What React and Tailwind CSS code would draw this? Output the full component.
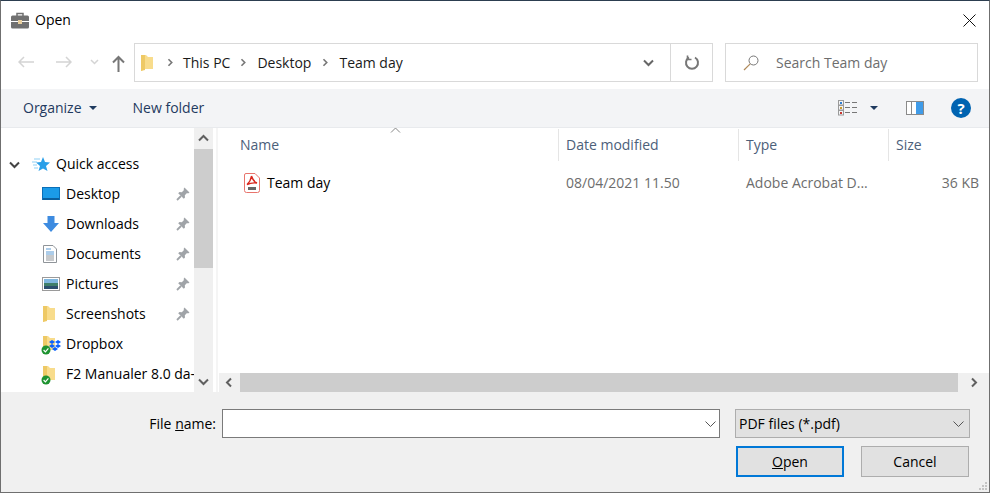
const Chevron = ({ className = "", dir = "right" }) => {
  const d = {
    right: "M3 1.5 L7 5.5 L3 9.5",
    left: "M7 1.5 L3 5.5 L7 9.5",
    up: "M1 7.5 L5.5 3 L10 7.5",
    down: "M1 3.5 L5.5 8 L10 3.5",
  }[dir];
  return (
    <svg width="11" height="11" viewBox="0 0 11 11" fill="none" stroke="currentColor" strokeWidth="2" className={className}>
      <path d={d} />
    </svg>
  );
};

const ThinChevron = () => (
  <svg width="13" height="8" viewBox="0 0 13 8" fill="none" stroke="#555" strokeWidth="1">
    <path d="M1.5 1.5 L6.5 6.5 L11.5 1.5" />
  </svg>
);

const Folder = ({ w = 12 }) => (
  <svg width={w + 2} height="18" viewBox="0 0 14 18">
    <path d="M1 1 H6 L8 3 H13 V15 H5 L1 17 Z" fill="#f8dc8c" />
    <path d="M1 1 H5 V16 L1 17 Z" fill="#eec965" />
  </svg>
);

const Check = () => (
  <svg width="10" height="10" viewBox="0 0 10 10" className="absolute left-[-1px] bottom-[-2px]">
    <circle cx="5" cy="5" r="4.5" fill="#1e9331" />
    <path d="M2.6 5 L4.4 6.8 L7.4 3.4" fill="none" stroke="#fff" strokeWidth="1.2" />
  </svg>
);

const Pin = () => (
  <svg width="14" height="14" viewBox="0 0 14 14">
    <path d="M8.5 0.5 L13.5 5.5 L12 6.4 L11 6 L8.8 8.2 L9 10.5 L7.8 11.8 L2.2 6.2 L3.5 5 L5.8 5.2 L8 3 L7.6 2 Z" fill="#a0a4a8" />
    <path d="M5 9 L1 13" stroke="#a0a4a8" strokeWidth="1.8" />
  </svg>
);

const navItems = [
  {
    label: "Desktop",
    pin: true,
    icon: (
      <svg width="18" height="14" viewBox="0 0 18 14">
        <rect x="0.5" y="0.5" width="17" height="12" fill="#1b9be8" stroke="#0a6fb8" />
        <rect x="1" y="11" width="16" height="2" fill="#0b5f9e" />
      </svg>
    ),
  },
  {
    label: "Downloads",
    pin: true,
    icon: (
      <svg width="18" height="18" viewBox="0 0 18 18">
        <path d="M5.5 1 H12.5 V8 H17 L9 17 L1 8 H5.5 Z" fill="#3d8be0" />
      </svg>
    ),
  },
  {
    label: "Documents",
    pin: true,
    icon: (
      <svg width="16" height="18" viewBox="0 0 16 18">
        <path d="M1.5 0.5 H11 L14.5 4 V17.5 H1.5 Z" fill="#fff" stroke="#8f9499" />
        <path d="M4 4 H9 M4 7 H12 M4 9 H12" stroke="#5b9bd5" />
        <path d="M4 11 H12 M4 13 H12 M4 15 H12" stroke="#8f9499" />
      </svg>
    ),
  },
  {
    label: "Pictures",
    pin: true,
    icon: (
      <svg width="18" height="14" viewBox="0 0 18 14">
        <rect x="0.5" y="0.5" width="17" height="13" fill="#fff" stroke="#9a9a9a" />
        <rect x="2" y="2" width="14" height="4" fill="#7fb7df" />
        <rect x="2" y="6" width="14" height="3" fill="#3f7f6a" />
        <rect x="2" y="9" width="14" height="3" fill="#2b4f6e" />
      </svg>
    ),
  },
  { label: "Screenshots", pin: true, icon: <Folder /> },
  {
    label: "Dropbox",
    icon: (
      <span className="relative flex">
        <Folder />
        <svg width="12" height="11" viewBox="0 0 12 11" className="absolute left-[7px] top-[5px]">
          <path d="M3 0 L6 2 L3 4 L0 2 Z M9 0 L12 2 L9 4 L6 2 Z M3 4 L6 6 L3 8 L0 6 Z M9 4 L12 6 L9 8 L6 6 Z M6 7 L9 9 L6 11 L3 9 Z" fill="#0a60ff" />
        </svg>
        <Check />
      </span>
    ),
  },
  {
    label: "F2 Manualer 8.0 da-",
    icon: (
      <span className="relative flex">
        <Folder />
        <Check />
      </span>
    ),
  },
];

const columns = [
  { label: "Name", cls: "w-[341px] pl-[22px]" },
  { label: "Date modified", cls: "w-[180px] pl-[7px]" },
  { label: "Type", cls: "w-[150px] pl-[7px]" },
  { label: "Size", cls: "flex-1 pl-[7px]" },
];

export default function App() {
  return (
    <div className="w-[990px] h-[493px] flex flex-col overflow-hidden bg-white border border-t-[#2c3e50] border-x-[#6f6f6f] border-b-[#6f6f6f] text-[14px] text-black font-['Open_Sans','Noto_Sans',sans-serif] leading-5">
      {/* Titlebar */}
      <div className="h-[38px] shrink-0 flex items-center pl-[10px] pr-[13px]">
        <svg width="18" height="17" viewBox="0 0 18 17">
          <path d="M6 4 V1.5 H12 V4" fill="none" stroke="#707070" strokeWidth="1.5" />
          <path d="M0 5 Q0 3.5 1.5 3.5 H16.5 Q18 3.5 18 5 V9 H0 Z" fill="#707070" />
          <path d="M0 10 H18 V15 Q18 16.5 16.5 16.5 H1.5 Q0 16.5 0 15 Z" fill="#707070" />
          <rect x="7" y="8" width="4" height="4" fill="#e9cf9e" />
        </svg>
        <span className="ml-[6px] text-[14px]">Open</span>
        <svg width="13" height="13" viewBox="0 0 13 13" className="ml-auto" stroke="#111" strokeWidth="1" fill="none">
          <path d="M0.5 0.5 L12.5 12.5 M12.5 0.5 L0.5 12.5" />
        </svg>
      </div>

      {/* Address row */}
      <div className="h-[50px] shrink-0 flex items-start pt-[4px] pl-[17px] pr-[11px]">
        <div className="w-[116px] h-[38px] flex items-center shrink-0">
          <svg width="16" height="12" viewBox="0 0 16 12" fill="none" stroke="#d4d4d4" strokeWidth="1.5">
            <path d="M16 6 H1 M6 1 L1 6 L6 11" />
          </svg>
          <svg width="16" height="12" viewBox="0 0 16 12" fill="none" stroke="#d4d4d4" strokeWidth="1.5" className="ml-[22px]">
            <path d="M0 6 H15 M10 1 L15 6 L10 11" />
          </svg>
          <svg width="9" height="6" viewBox="0 0 9 6" fill="none" stroke="#d4d4d4" strokeWidth="1.5" className="ml-[18px]">
            <path d="M1 1 L4.5 4.5 L8 1" />
          </svg>
          <svg width="13" height="17" viewBox="0 0 13 17" fill="none" stroke="#777" strokeWidth="2" className="ml-[13px] mt-[3px]">
            <path d="M6.5 17 V2 M1 7.5 L6.5 2 L12 7.5" />
          </svg>
        </div>
        <div className="w-[537px] h-[39px] flex items-center border border-[#d9d9d9] pl-[5px] shrink-0">
          <Folder />
          <Chevron className="ml-[12px] text-[#777] w-[9px] h-[9px]" />
          <span className="ml-[8px] text-[#1a1a1a]">This PC</span>
          <Chevron className="ml-[9px] text-[#777] w-[9px] h-[9px]" />
          <span className="ml-[9px] text-[#1a1a1a]">Desktop</span>
          <Chevron className="ml-[10px] text-[#777] w-[9px] h-[9px]" />
          <span className="ml-[9px] text-[#1a1a1a]">Team day</span>
          <Chevron dir="down" className="ml-auto mr-[16px] text-[#666]" />
        </div>
        <div className="w-[42px] h-[39px] flex items-center justify-center border border-l-0 border-[#d9d9d9] shrink-0">
          <svg width="16" height="16" viewBox="0 0 16 16" fill="none" stroke="#777" strokeWidth="2">
            <path d="M5 2.5 A6 6 0 1 0 11 2.5" />
            <path d="M3.5 0.5 V4.5 H7.5" strokeWidth="1.6" />
          </svg>
        </div>
        <div className="ml-[12px] w-[253px] h-[39px] flex items-center border border-[#d9d9d9] pl-[17px] shrink-0">
          <svg width="16" height="16" viewBox="0 0 16 16" fill="none" stroke="#777" strokeWidth="1">
            <circle cx="10.5" cy="5.5" r="4.5" />
            <path d="M7.2 8.8 L1 15" stroke="#b08a5a" strokeWidth="1.2" />
          </svg>
          <span className="ml-[17px] text-[#6d6d6d]">Search Team day</span>
        </div>
      </div>

      {/* Toolbar */}
      <div className="h-[39px] shrink-0 flex items-center bg-[#f3f4f6] border-b border-[#e8eaed] pl-[22px] pr-[18px] text-[#1f3a5f]">
        <span>Organize</span>
        <svg width="8" height="4" viewBox="0 0 8 4" className="ml-[7px]"><path d="M0 0 H8 L4 4 Z" fill="#1f3a5f" /></svg>
        <span className="ml-[36px]">New folder</span>
        <svg width="19" height="16" viewBox="0 0 19 16" className="ml-auto" fill="none" stroke="#9a9a9a">
          <rect x="0.5" y="0.5" width="5" height="4.5" />
          <rect x="0.5" y="5.5" width="5" height="4.5" />
          <rect x="0.5" y="10.5" width="5" height="4.5" />
          <path d="M7 2.5 H12 M14 2.5 H19 M7 7.5 H12 M14 7.5 H19 M7 12.5 H12 M14 12.5 H19" stroke="#777" />
          <rect x="2" y="2" width="2" height="2" fill="#2d7dd2" stroke="none" />
          <rect x="2" y="7" width="2" height="2" fill="#c99a2e" stroke="none" />
          <rect x="2" y="12" width="2" height="2" fill="#c9352e" stroke="none" />
        </svg>
        <svg width="8" height="4" viewBox="0 0 8 4" className="ml-[13px]"><path d="M0 0 H8 L4 4 Z" fill="#1f3a5f" /></svg>
        <svg width="18" height="14" viewBox="0 0 18 14" className="ml-[28px]">
          <rect x="0.5" y="0.5" width="17" height="13" fill="#fff" stroke="#8a8a8a" />
          <rect x="10" y="1" width="7" height="12" fill="#3f9be8" />
          <rect x="5" y="1" width="1" height="12" fill="#8a8a8a" />
        </svg>
        <span className="ml-[27px] w-[20px] h-[20px] rounded-full bg-[#0063b1] text-white font-bold text-[15px] flex items-center justify-center">?</span>
      </div>

      {/* Main */}
      <div className="h-[264px] shrink-0 flex">
        <div className="w-[193px] shrink-0 overflow-hidden pt-[21px] pl-[8px]">
          <div className="h-[30px] flex items-center whitespace-nowrap">
            <Chevron dir="down" className="text-[#444]" />
            <svg width="18" height="16" viewBox="0 0 18 16" className="ml-[12px]">
              <path d="M11 1 L13 6 L18 6.5 L14 10 L15.5 15 L11 12.5 L6.5 15 L8 10 L4 6.5 L9 6 Z" fill="#2a9fe8" />
              <path d="M2 3 H8 M0 6 H5 M1 9 H5 M2 12 H6" stroke="#8fd0f5" />
            </svg>
            <span className="ml-[6px]">Quick access</span>
          </div>
          {navItems.map((item) => (
            <div key={item.label} className="h-[30px] flex items-center whitespace-nowrap pl-[33px] pr-[4px]">
              <span className="w-[24px] flex shrink-0 items-center">{item.icon}</span>
              <span className="text-[14px]">{item.label}</span>
              {item.pin && <span className="ml-auto flex"><Pin /></span>}
            </div>
          ))}
        </div>

        {/* Sidebar scrollbar */}
        <div className="w-[19px] shrink-0 flex flex-col bg-[#f0f0f0] text-[#606060]">
          <div className="h-[21px] flex items-center justify-center"><Chevron dir="up" /></div>
          <div className="h-[119px] bg-[#cdcdcd]" />
          <div className="mt-auto h-[21px] flex items-center justify-center"><Chevron dir="down" /></div>
        </div>
        <div className="w-[3px] shrink-0" />
        <div className="w-[2px] shrink-0 bg-[#f5f5f5]" />

        {/* File list */}
        <div className="flex-1 flex flex-col min-w-0 relative">
          <Chevron dir="up" className="absolute left-[172px] top-[-3px] text-[#888] [stroke-width:1px]" />
          <div className="h-[33px] flex items-center shrink-0 text-[#4c607a] pt-[1px]">
            {columns.map((c) => (
              <div key={c.label} className={`${c.cls} h-full flex items-center border-r border-[#e5e5e5] last:border-r-0`}>
                {c.label}
              </div>
            ))}
          </div>
          <div className="h-[44px] flex items-center text-[#6d6d6d] shrink-0">
            <div className="w-[341px] pl-[26px] flex items-center text-black">
              <svg width="16" height="20" viewBox="0 0 16 20">
                <path d="M2 0.5 H11 L15.5 5 V17.5 Q15.5 19.5 13.5 19.5 H2.5 Q0.5 19.5 0.5 17.5 V2 Q0.5 0.5 2 0.5 Z" fill="#fff" stroke="#e8746c" />
                <path d="M7.5 3 C7 6 6 9 3 11.5 C6 10 9 9.5 13 10 C10 9 8.5 6 7.5 3 Z" fill="none" stroke="#d9281e" strokeWidth="1.4" />
                <rect x="4" y="14" width="8" height="3" fill="#666" />
              </svg>
              <span className="ml-[7px]">Team day</span>
            </div>
            <div className="w-[180px] pl-[7px]">08/04/2021 11.50</div>
            <div className="w-[150px] pl-[7px] whitespace-nowrap">Adobe Acrobat D...</div>
            <div className="flex-1 text-right pr-[10px]">36 KB</div>
          </div>
          {/* Horizontal scrollbar */}
          <div className="mt-auto h-[19px] ml-[1px] flex bg-[#f0f0f0] text-[#606060]">
            <div className="w-[21px] flex items-center justify-center"><Chevron dir="left" /></div>
            <div className="w-[718px] bg-[#cdcdcd]" />
            <div className="ml-auto w-[30px] flex items-center justify-center"><Chevron dir="right" /></div>
          </div>
        </div>
      </div>

      {/* Footer */}
      <div className="flex-1 bg-[#f0f0f0] relative pt-[17px]">
        <div className="flex items-center h-[29px]">
          <span className="w-[215px] text-right text-[14px] whitespace-nowrap">
            File <span className="underline">n</span>ame:
          </span>
          <div className="ml-[6px] w-[498px] h-[29px] bg-white border border-[#7a7a7a] flex items-center justify-end pr-[2px]">
            <ThinChevron />
          </div>
          <div className="ml-[15px] w-[235px] h-[29px] bg-[#e1e1e1] border border-[#adadad] flex items-center pl-[3px] pr-[4px]">
            <span>PDF files (*.pdf)</span>
            <span className="ml-auto flex"><ThinChevron /></span>
          </div>
        </div>
        <div className="flex mt-[8px] pl-[735px]">
          <button className="w-[108px] h-[31px] bg-[#e1e1e1] border-2 border-[#0078d7] flex items-center justify-center">
            <span><span className="underline">O</span>pen</span>
          </button>
          <button className="ml-[17px] w-[108px] h-[31px] bg-[#e1e1e1] border border-[#adadad] flex items-center justify-center">
            Cancel
          </button>
        </div>
        <svg width="10" height="10" viewBox="0 0 10 10" className="absolute right-[1px] bottom-[1px]" fill="#c4c4c4">
          <rect x="7" y="1" width="2" height="2" />
          <rect x="4" y="4" width="2" height="2" />
          <rect x="7" y="4" width="2" height="2" />
          <rect x="1" y="7" width="2" height="2" />
          <rect x="4" y="7" width="2" height="2" />
          <rect x="7" y="7" width="2" height="2" />
        </svg>
      </div>
    </div>
  );
}
